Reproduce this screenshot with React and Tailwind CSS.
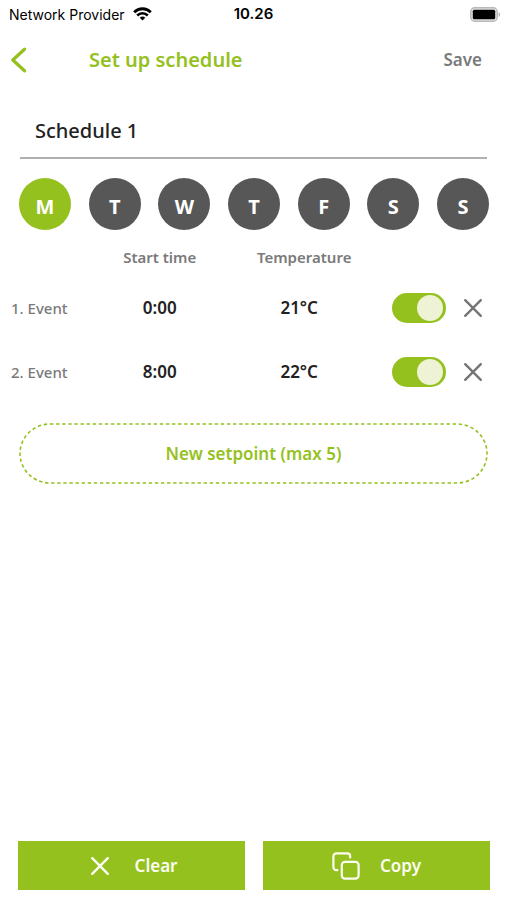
import { useState } from 'react';

const days = [
  { id: 'mon', label: 'M' },
  { id: 'tue', label: 'T' },
  { id: 'wed', label: 'W' },
  { id: 'thu', label: 'T' },
  { id: 'fri', label: 'F' },
  { id: 'sat', label: 'S' },
  { id: 'sun', label: 'S' },
];

const initialEvents = [
  { id: 1, time: '0:00', temperature: '21°C', active: true },
  { id: 2, time: '8:00', temperature: '22°C', active: true },
];

function WifiIcon() {
  return (
    <svg viewBox="0 0 19 14" className="w-[19px] h-[14px]" fill="none" stroke="currentColor" aria-hidden="true">
      <path d="M1.2 5.2C5.8 0.6 13.2 0.6 17.8 5.2" strokeWidth="2.8" />
      <path d="M4.2 8.5C7.2 5.5 11.8 5.5 14.8 8.5" strokeWidth="2.6" />
      <path d="M9.5 13.6L6.7 10.8C8.3 9.2 10.7 9.2 12.3 10.8Z" fill="currentColor" stroke="none" />
    </svg>
  );
}

function BatteryIcon() {
  return (
    <svg viewBox="0 0 31 15" className="w-[31px] h-[15px]" aria-hidden="true">
      <rect x="0.8" y="0.8" width="26.4" height="13.4" rx="4" fill="#e4e4e4" stroke="#b9b9b9" strokeWidth="1.5" />
      <rect x="2.8" y="2.8" width="22.4" height="9.4" rx="1.5" fill="#000" />
      <path d="M28.6 5.2C30.6 5.8 30.6 9.2 28.6 9.8Z" fill="#b5b5b5" />
    </svg>
  );
}

function CrossIcon() {
  return (
    <svg viewBox="0 0 20 20" className="w-5 h-5" fill="none" stroke="currentColor" strokeWidth="2.4" strokeLinecap="round" aria-hidden="true">
      <path d="M2.2 2.2L17.8 17.8M17.8 2.2L2.2 17.8" />
    </svg>
  );
}

function CopyIcon() {
  return (
    <svg viewBox="0 0 28 28" className="w-7 h-7" fill="none" stroke="currentColor" strokeWidth="2.2" strokeLinecap="round" strokeLinejoin="round" aria-hidden="true">
      <rect x="9.8" y="9.8" width="16.8" height="16.8" rx="3.2" />
      <path d="M5.4 18.2H4.4A3 3 0 0 1 1.4 15.2V4.4A3 3 0 0 1 4.4 1.4H15.2A3 3 0 0 1 18.2 4.4V5.4" />
    </svg>
  );
}

export default function App() {
  const [name, setName] = useState('Schedule 1');
  const [day, setDay] = useState('mon');
  const [events, setEvents] = useState(initialEvents);

  const toggleEvent = (id) => {
    setEvents(events.map((e) => (e.id === id ? { ...e, active: !e.active } : e)));
  };

  const removeEvent = (id) => {
    setEvents(events.filter((e) => e.id !== id));
  };

  const addEvent = () => {
    if (events.length >= 5) return;
    setEvents([...events, { id: Date.now(), time: '12:00', temperature: '21°C', active: true }]);
  };

  return (
    <div className="min-h-screen flex flex-col bg-white font-['Noto_Sans',sans-serif] text-[#222222]">
      {/* Status bar */}
      <div className="h-7 grid grid-cols-3 items-center pl-[9px] pr-[6px] font-['Inter',sans-serif] text-[14px] text-black">
        <div className="flex items-center gap-2 whitespace-nowrap">
          <span>Network Provider</span>
          <WifiIcon />
        </div>
        <span className="pr-[3px] text-center text-[15px] font-semibold">10.26</span>
        <div className="flex justify-end">
          <BatteryIcon />
        </div>
      </div>

      {/* Header */}
      <header className="h-16 flex items-center pl-[9px] pr-[25px]">
        <button type="button" aria-label="Back" className="w-20 text-[#95c11f]">
          <svg viewBox="0 0 18 26" className="w-[18px] h-[26px]" fill="none" stroke="currentColor" strokeWidth="3.2" strokeLinecap="round" strokeLinejoin="round" aria-hidden="true">
            <path d="M15.5 2.2L3.8 13L15.5 23.8" />
          </svg>
        </button>
        <h1 className="flex-1 text-[20px] font-semibold text-[#95c11f]">Set up schedule</h1>
        <button type="button" className="text-[17px] font-semibold text-[#7a7a7a]">Save</button>
      </header>

      <main className="flex-1">
        <div className="mx-5 mt-[11px]">
          <input
            type="text"
            aria-label="Schedule name"
            value={name}
            onChange={(e) => setName(e.target.value)}
            className="w-full h-14 px-[15px] border-b-2 border-[#b0b0b0] text-[20px] font-medium outline-none"
          />
        </div>

        {/* Days */}
        <div className="mt-[19px] ml-[19px] mr-[18px] flex justify-between">
          {days.map((d) => (
            <button
              key={d.id}
              type="button"
              aria-pressed={day === d.id}
              onClick={() => setDay(d.id)}
              className={`size-[52px] pt-[5px] rounded-full text-[20px] font-bold text-white ${day === d.id ? 'bg-[#95c11f]' : 'bg-[#575757]'}`}
            >
              {d.label}
            </button>
          ))}
        </div>

        {/* Events */}
        <table className="mt-2 w-full table-fixed">
          <thead>
            <tr className="h-[38px] text-[15px] text-[#7a7a7a]">
              <td className="w-[20%]" />
              <th scope="col" className="w-[23%] font-semibold">Start time</th>
              <th scope="col" className="w-[34%] font-semibold">Temperature</th>
              <td className="w-[12%]" />
              <td className="w-[11%]" />
            </tr>
          </thead>
          <tbody>
            {events.map((event, index) => (
              <tr key={event.id} className="h-16 text-center text-[17px] font-semibold">
                <th scope="row" className="pl-[11px] text-left text-[15px] font-medium text-[#7a7a7a]">{index + 1}. Event</th>
                <td>{event.time}</td>
                <td className="pr-[10px]">{event.temperature}</td>
                <td>
                  <input
                    type="checkbox"
                    role="switch"
                    aria-label={`Event ${index + 1} active`}
                    checked={event.active}
                    onChange={() => toggleEvent(event.id)}
                    className="block ml-[2px] appearance-none w-[54px] h-[30px] p-[2px] rounded-full bg-[#b5b5b5] checked:bg-[#95c11f] before:block before:size-[26px] before:rounded-full before:bg-[#edf3d4] checked:before:ml-[23px]"
                  />
                </td>
                <td>
                  <button
                    type="button"
                    aria-label={`Remove event ${index + 1}`}
                    onClick={() => removeEvent(event.id)}
                    className="block ml-3 text-[#757575]"
                  >
                    <CrossIcon />
                  </button>
                </td>
              </tr>
            ))}
          </tbody>
        </table>

        <div className="mt-5 mx-5">
          <button
            type="button"
            onClick={addEvent}
            className="relative w-full h-[59px] rounded-full text-[17px] font-semibold text-[#95c11f]"
          >
            <svg className="absolute inset-0 size-full overflow-visible" fill="none" aria-hidden="true">
              <rect width="100%" height="100%" rx="30" stroke="currentColor" strokeWidth="1.6" strokeDasharray="3.4 2.7" />
            </svg>
            New setpoint (max 5)
          </button>
        </div>
      </main>

      {/* Actions */}
      <footer className="grid grid-cols-2 gap-[18px] pl-[18px] pr-[17px] pb-[10px] text-[17px] font-semibold text-[#fbfdf2]">
        <button
          type="button"
          onClick={() => setEvents([])}
          className="h-[49px] pl-1 flex items-center justify-center gap-[25px] bg-[#95c11f]"
        >
          <CrossIcon />
          Clear
        </button>
        <button type="button" className="h-[49px] flex items-center justify-center gap-5 bg-[#95c11f]">
          <CopyIcon />
          Copy
        </button>
      </footer>
    </div>
  );
}
